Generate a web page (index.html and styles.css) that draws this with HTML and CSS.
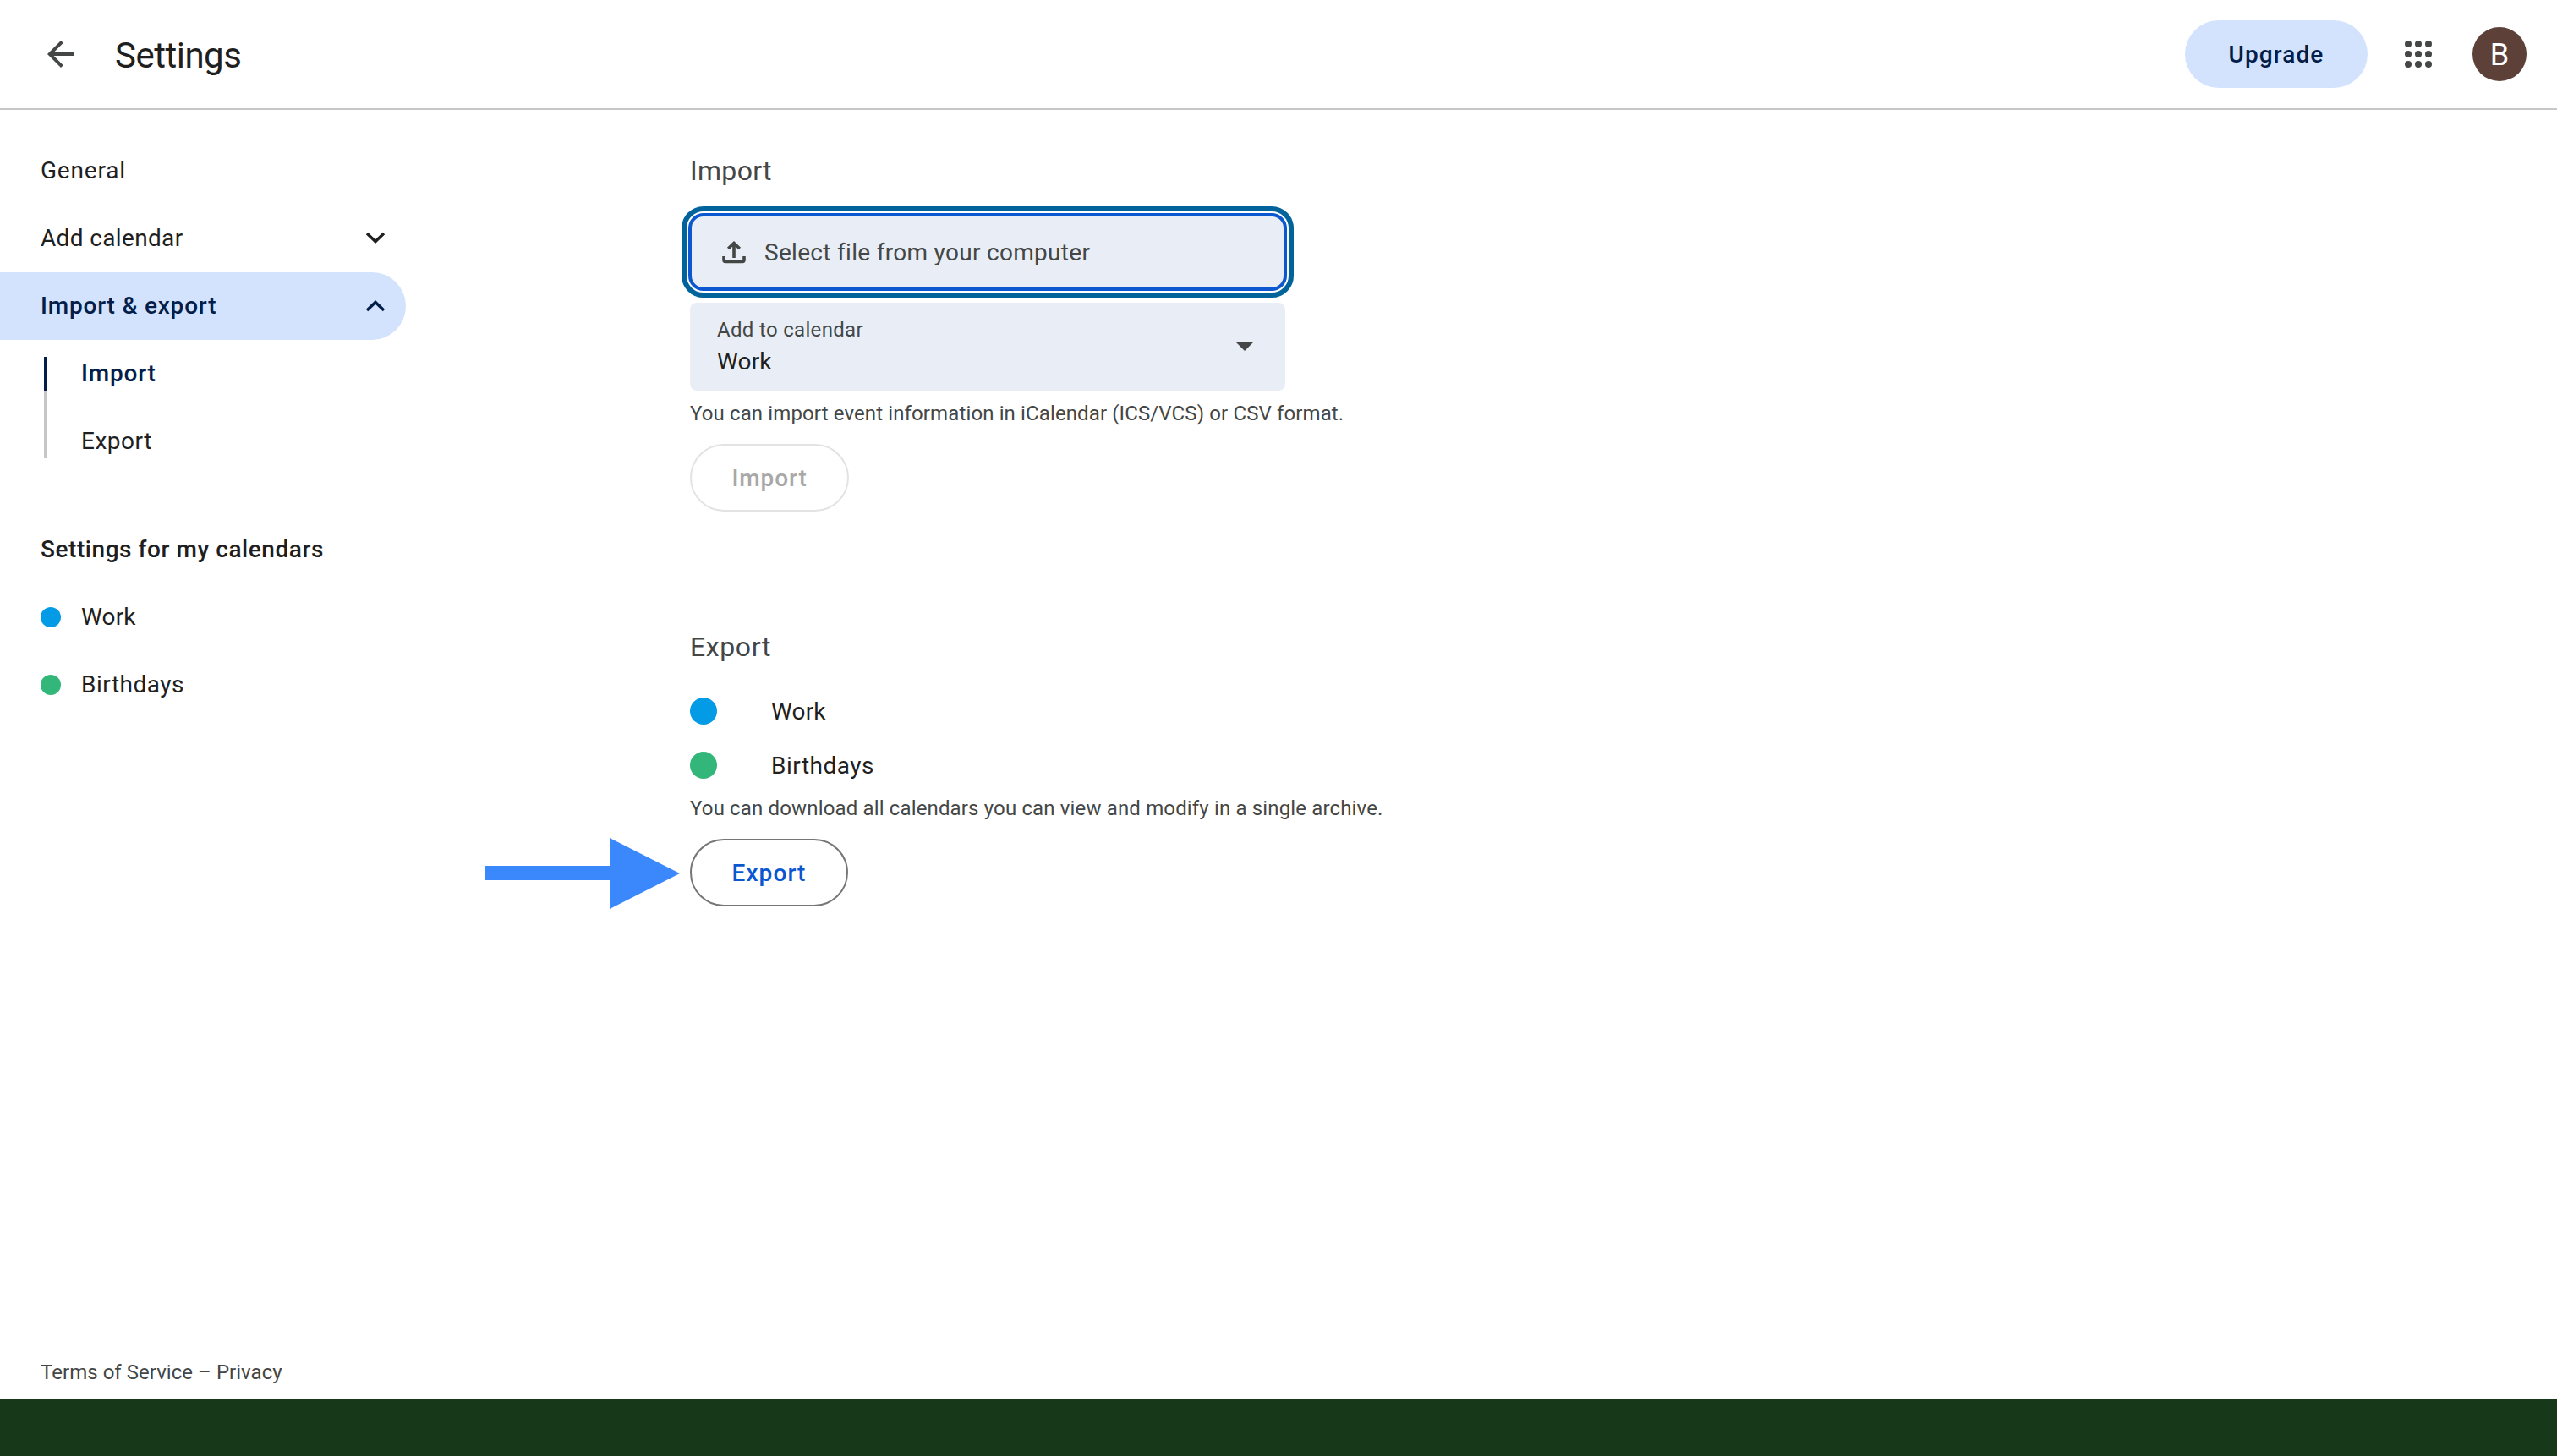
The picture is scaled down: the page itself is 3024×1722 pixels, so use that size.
FILE: index.html
```html
<!DOCTYPE html>
<html lang="en">
<head>
    <meta charset="UTF-8">
    <meta name="viewport" content="width=device-width, initial-scale=1.0">
    <title>Settings</title>
    <link rel="stylesheet" href="styles.css">
</head>
<body>
    <header class="topbar">
        <svg class="back" viewBox="0 0 24 24" width="48" height="48"><path d="M20 11H7.83l5.59-5.59L12 4l-8 8 8 8 1.41-1.41L7.83 13H20v-2z" fill="#444746"/></svg>
        <h1 class="title">Settings</h1>
        <button class="upgrade">Upgrade</button>
        <svg class="apps" viewBox="0 0 32 32" width="32" height="32" fill="#444746">
            <circle cx="4" cy="4" r="4"/><circle cx="16" cy="4" r="4"/><circle cx="28" cy="4" r="4"/>
            <circle cx="4" cy="16" r="4"/><circle cx="16" cy="16" r="4"/><circle cx="28" cy="16" r="4"/>
            <circle cx="4" cy="28" r="4"/><circle cx="16" cy="28" r="4"/><circle cx="28" cy="28" r="4"/>
        </svg>
        <div class="avatar">B</div>
    </header>

    <div class="page">
        <nav class="sidebar">
            <a class="item general">General</a>
            <a class="item add">Add calendar
                <svg viewBox="0 0 24 16" width="24" height="16"><path d="M2 3l10 9.6L22 3" fill="none" stroke="#1f1f1f" stroke-width="3.4"/></svg>
            </a>
            <a class="item active">Import &amp; export
                <svg viewBox="0 0 24 16" width="24" height="16"><path d="M2 14l10-9.6L22 14" fill="none" stroke="#041e49" stroke-width="3.4"/></svg>
            </a>
            <div class="submenu">
                <div class="track"></div>
                <div class="sublinks">
                    <a class="current">Import</a>
                    <a>Export</a>
                </div>
            </div>
            <h2 class="group">Settings for my calendars</h2>
            <a class="item cal"><span class="dot blue"></span><span class="name work">Work</span></a>
            <a class="item cal"><span class="dot green"></span><span class="name">Birthdays</span></a>
            <p class="terms">Terms of Service – Privacy</p>
        </nav>

        <main class="content">
            <h2 class="import-title">Import</h2>
            <button class="file">
                <svg viewBox="0 0 28 28" width="28" height="28" fill="none" stroke="#444746" stroke-width="3.6">
                    <path d="M14 21V4M7.2 10L14 3.4l6.8 6.6"/>
                    <path d="M2 19v4.5q0 1.9 1.9 1.9h20.2q1.9 0 1.9-1.9V19"/>
                </svg>
                Select file from your computer
            </button>
            <div class="select">
                <div class="field">
                    <div class="label">Add to calendar</div>
                    <div class="value">Work</div>
                </div>
                <svg viewBox="0 0 20 10" width="20" height="10"><path d="M0 0h20L10 10z" fill="#444746"/></svg>
            </div>
            <p class="hint">You can import event information in iCalendar (ICS/VCS) or CSV format.</p>
            <button class="pill disabled">Import</button>

            <h2 class="export-title">Export</h2>
            <div class="row"><span class="dot blue"></span><span class="work">Work</span></div>
            <div class="row"><span class="dot green"></span>Birthdays</div>
            <p class="hint export-hint">You can download all calendars you can view and modify in a single archive.</p>
            <div class="export-action">
                <button class="pill export">Export</button>
                <svg class="pointer" viewBox="0 0 231 84" width="231" height="84"><path d="M0 33h148V0l83 42-83 42V50H0z" fill="#3b88fd"/></svg>
            </div>
        </main>
    </div>

    <div class="bottom-strip"></div>
</body>
</html>
```
FILE: styles.css
```css
* {
    box-sizing: border-box;
}
body {
    margin: 0;
    height: 1722px;
    display: flex;
    flex-direction: column;
    font-family: Roboto, sans-serif;
    font-size: 28px;
    letter-spacing: 0.5px;
    color: #1f1f1f;
    background-color: #fff;
    overflow: hidden;
}
h1, h2, p {
    margin: 0;
    font-weight: 400;
}
svg {
    display: block;
    flex-shrink: 0;
}
button {
    font: inherit;
    letter-spacing: inherit;
    padding: 0;
    cursor: pointer;
}

/* top bar */
.topbar {
    display: flex;
    align-items: center;
    flex-shrink: 0;
    height: 130px;
    padding: 0 36px 0 48px;
    border-bottom: 2px solid #c4c7c5;
}
.title {
    margin-left: 40px;
    padding-top: 3px;
    font-size: 42px;
    line-height: 48px;
    letter-spacing: -0.5px;
}
.upgrade {
    width: 216px;
    height: 80px;
    margin-left: auto;
    border: none;
    border-radius: 40px;
    background-color: #d3e3fd;
    color: #041e49;
    font-weight: 500;
    letter-spacing: 1.1px;
}
.apps {
    margin: 0 48px 0 44px;
}
.avatar {
    width: 64px;
    height: 64px;
    border-radius: 50%;
    background-color: #5d4038;
    color: #fff;
    font-size: 36px;
    line-height: 66px;
    letter-spacing: 0;
    text-align: center;
}

.page {
    display: flex;
    flex: 1;
    min-height: 0;
}

/* sidebar */
.sidebar {
    display: flex;
    flex-direction: column;
    width: 480px;
    margin-right: 336px;
    padding-top: 32px;
}
.item {
    display: flex;
    align-items: center;
    justify-content: space-between;
    flex-shrink: 0;
    height: 80px;
    padding: 0 24px 2px 48px;
    border-radius: 0 40px 40px 0;
}
.general {
    letter-spacing: 0.8px;
}
.add {
    letter-spacing: 0.35px;
}
.active {
    background-color: #d3e3fd;
    color: #041e49;
    font-weight: 500;
    letter-spacing: 0.8px;
}
.submenu {
    display: flex;
    height: 160px;
    padding-left: 52px;
}
.track {
    width: 4px;
    height: 120px;
    margin-top: 20px;
    background: linear-gradient(#041e49 40px, #c4c7c5 40px);
}
.sublinks {
    margin-left: 40px;
    line-height: 80px;
}
.sublinks a {
    display: block;
}
.sublinks .current {
    color: #041e49;
    font-weight: 500;
    letter-spacing: 0.8px;
}
.group {
    margin-top: 48px;
    padding-left: 48px;
    font-size: 28px;
    font-weight: 500;
    line-height: 80px;
    letter-spacing: 0.56px;
}
.cal {
    justify-content: flex-start;
    gap: 24px;
    padding-bottom: 0;
}
.name {
    padding-bottom: 2px;
}
.dot {
    width: 24px;
    height: 24px;
    border-radius: 50%;
}
.blue {
    background-color: #039be5;
}
.green {
    background-color: #33b679;
}
.work {
    letter-spacing: 0.15px;
}
.terms {
    margin-top: auto;
    padding: 0 0 15px 48px;
    color: #444746;
    font-size: 24px;
    line-height: 32px;
    letter-spacing: 0.04px;
}

/* import and export sections */
.content {
    padding-top: 52px;
}
.content h2 {
    color: #444746;
    font-size: 32px;
    line-height: 40px;
}
.import-title {
    letter-spacing: 0.3px;
}
.file {
    display: flex;
    align-items: center;
    gap: 22px;
    width: 708px;
    height: 92px;
    margin: 30px 0 0 -2px;
    padding-left: 36px;
    border: 4px solid #0b57d0;
    border-radius: 18px;
    outline: 6px solid #00639b;
    outline-offset: 2px;
    background-color: #e9eef6;
    color: #444746;
    letter-spacing: 0.3px;
}
.select {
    display: flex;
    align-items: center;
    justify-content: space-between;
    width: 704px;
    height: 104px;
    margin-top: 14px;
    padding: 0 38px 0 32px;
    border-radius: 8px;
    background-color: #e9eef6;
}
.field {
    padding-top: 3px;
}
.label {
    color: #444746;
    font-size: 24px;
    line-height: 32px;
    letter-spacing: 0.32px;
}
.value {
    line-height: 44px;
    letter-spacing: 0.15px;
}
.hint {
    margin-top: 11px;
    color: #444746;
    font-size: 24px;
    line-height: 32px;
    letter-spacing: 0.12px;
}
.pill {
    display: block;
    width: 188px;
    height: 80px;
    margin-top: 20px;
    border: 2px solid #747775;
    border-radius: 40px;
    background-color: #fff;
    font-weight: 500;
    letter-spacing: 0.9px;
}
.disabled {
    border-color: #e3e3e3;
    color: #a8a8a8;
}
.export {
    width: 187px;
    color: #0b57d0;
    letter-spacing: 1.1px;
}
.export-title {
    margin: 140px 0 24px;
    letter-spacing: 0.6px;
}
.row {
    display: flex;
    align-items: center;
    gap: 64px;
    height: 64px;
}
.row .dot {
    width: 32px;
    height: 32px;
}
.export-hint {
    margin-top: 3px;
    letter-spacing: 0.15px;
}

/* arrow drawn over the page, pointing at the export button */
.export-action {
    position: relative;
}
.pointer {
    position: absolute;
    top: -1px;
    left: -243px;
}

.bottom-strip {
    flex-shrink: 0;
    height: 68px;
    background-color: #173819;
}
```
